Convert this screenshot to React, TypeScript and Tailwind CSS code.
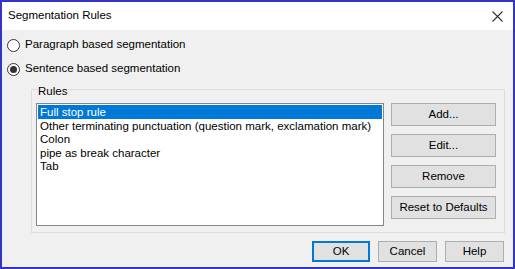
import React from 'react'

const font = { fontFamily: '"Liberation Sans", Arial, sans-serif' }

function Radio({ checked, label }: { checked?: boolean; label: string }) {
  return (
    <div className="flex items-center h-[20px] pl-[5px]">
      <div className="w-[13px] h-[13px] rounded-full border border-[#333333] bg-white flex items-center justify-center">
        {checked && <div className="w-[7px] h-[7px] rounded-full bg-[#333333]" />}
      </div>
      <span className="ml-[5px] text-[11.5px] text-black">{label}</span>
    </div>
  )
}

function Btn({ label, className = '' }: { label: string; className?: string }) {
  return (
    <div
      className={`flex items-center justify-center bg-[#e1e1e1] border border-[#adadad] text-[11.5px] text-black ${className}`}
    >
      {label}
    </div>
  )
}

export default function App() {
  const rules = [
    'Full stop rule',
    'Other terminating punctuation (question mark, exclamation mark)',
    'Colon',
    'pipe as break character',
    'Tab',
  ]
  return (
    <div style={font} className="w-[515px] h-[269px] border-2 border-[#3434c8] flex flex-col bg-[#f0f0f0]">
      {/* Title bar */}
      <div className="h-[28px] bg-white flex items-center justify-between pl-[6px] pr-[10px]">
        <span className="text-[11.5px] text-black">Segmentation Rules</span>
        <svg width="11" height="11" viewBox="0 0 11 11">
          <path d="M0.5 0.5L10.5 10.5M10.5 0.5L0.5 10.5" stroke="#333" strokeWidth="1.1" />
        </svg>
      </div>

      {/* Body */}
      <div className="flex-1 flex flex-col pt-[5px]">
        <div className="flex flex-col gap-[4px]">
          <Radio label="Paragraph based segmentation" />
          <Radio checked label="Sentence based segmentation" />
        </div>

        {/* Group box */}
        <div className="relative ml-[29px] mt-[10px] w-[474px] h-[144px] border border-[#dcdcdc] flex pt-[13px] pl-[4px]">
          <span className="absolute -top-[6px] left-[5px] px-[1px] bg-[#f0f0f0] text-[11.5px] leading-[14px] text-black">
            Rules
          </span>
          <div className="w-[348px] h-[123px] border border-[#828790] bg-white p-[1px]">
            {rules.map((r, i) => (
              <div
                key={r}
                className={`h-[13.6px] leading-[14px] text-[11.5px] pl-[2px] whitespace-nowrap ${
                  i === 0 ? 'bg-[#0078d7] text-white' : 'text-black'
                }`}
              >
                {r}
              </div>
            ))}
          </div>
          <div className="ml-[7px] flex flex-col gap-[8px]">
            <Btn label="Add..." className="w-[105px] h-[23px]" />
            <Btn label="Edit..." className="w-[105px] h-[23px]" />
            <Btn label="Remove" className="w-[105px] h-[23px]" />
            <Btn label="Reset to Defaults" className="w-[105px] h-[23px]" />
          </div>
        </div>

        {/* Bottom buttons */}
        <div className="flex justify-end gap-[8px] mt-[8px] pr-[9px]">
          <Btn label="OK" className="w-[58px] h-[21px] border-[#0078d7]! border-2!" />
          <Btn label="Cancel" className="w-[59px] h-[21px]" />
          <Btn label="Help" className="w-[59px] h-[21px]" />
        </div>
      </div>
    </div>
  )
}
